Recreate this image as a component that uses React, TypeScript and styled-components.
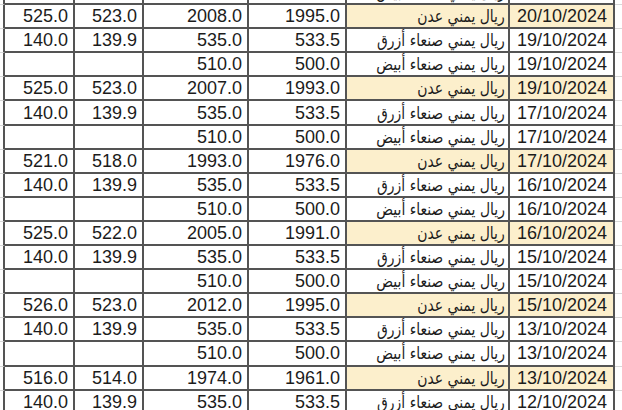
import React from 'react';
import styled, {createGlobalStyle} from 'styled-components';

type Kind = 'left' | 'right' | 'num' | 'label' | 'date';

interface RowData {
    nums: [string, string, string, string];
    label: string;
    date: string;
    aden?: boolean;
}

const ADEN = 'ريال يمني عدن';
const BLUE = 'ريال يمني صنعاء أزرق';
const WHITE = 'ريال يمني صنعاء أبيض';

const rows: RowData[] = [
    {nums: ['', '', '510.0', '500.0'], label: WHITE, date: '20/10/2024'},
    {nums: ['525.0', '523.0', '2008.0', '1995.0'], label: ADEN, date: '20/10/2024', aden: true},
    {nums: ['140.0', '139.9', '535.0', '533.5'], label: BLUE, date: '19/10/2024'},
    {nums: ['', '', '510.0', '500.0'], label: WHITE, date: '19/10/2024'},
    {nums: ['525.0', '523.0', '2007.0', '1993.0'], label: ADEN, date: '19/10/2024', aden: true},
    {nums: ['140.0', '139.9', '535.0', '533.5'], label: BLUE, date: '17/10/2024'},
    {nums: ['', '', '510.0', '500.0'], label: WHITE, date: '17/10/2024'},
    {nums: ['521.0', '518.0', '1993.0', '1976.0'], label: ADEN, date: '17/10/2024', aden: true},
    {nums: ['140.0', '139.9', '535.0', '533.5'], label: BLUE, date: '16/10/2024'},
    {nums: ['', '', '510.0', '500.0'], label: WHITE, date: '16/10/2024'},
    {nums: ['525.0', '522.0', '2005.0', '1991.0'], label: ADEN, date: '16/10/2024', aden: true},
    {nums: ['140.0', '139.9', '535.0', '533.5'], label: BLUE, date: '15/10/2024'},
    {nums: ['', '', '510.0', '500.0'], label: WHITE, date: '15/10/2024'},
    {nums: ['526.0', '523.0', '2012.0', '1995.0'], label: ADEN, date: '15/10/2024', aden: true},
    {nums: ['140.0', '139.9', '535.0', '533.5'], label: BLUE, date: '13/10/2024'},
    {nums: ['', '', '510.0', '500.0'], label: WHITE, date: '13/10/2024'},
    {nums: ['516.0', '514.0', '1974.0', '1961.0'], label: ADEN, date: '13/10/2024', aden: true},
    {nums: ['140.0', '139.9', '535.0', '533.5'], label: BLUE, date: '12/10/2024'},
];

const GlobalStyle = createGlobalStyle`
  html, body {
    margin: 0;
    padding: 0;
    background: #fff;
    overflow: hidden;
  }
`;

export default function App() {
    return (
        <>
            <GlobalStyle/>
            <Sheet>
                <StyledGrid>
                    {rows.map((row, i) => (
                        <React.Fragment key={i}>
                            <StyledCell $kind="left"/>
                            {row.nums.map((n, j) => (
                                <StyledCell key={j} $kind="num">{n}</StyledCell>
                            ))}
                            <StyledCell $kind="label" $highlight={row.aden}>
                                <StyledLabel dir="rtl">{row.label}</StyledLabel>
                            </StyledCell>
                            <StyledCell $kind="date" $highlight={row.aden}>{row.date}</StyledCell>
                            <StyledCell $kind="right"/>
                        </React.Fragment>
                    ))}
                </StyledGrid>
            </Sheet>
        </>
    );
}

const Sheet = styled.div`
  width: 622px;
  height: 410px;
  overflow: hidden;
  background: #fff;
`;

const StyledGrid = styled.div`
  margin-top: -19px;
  display: grid;
  grid-template-columns: 5px 70px 69px 105px 98px 163px 105px 7px;
  grid-auto-rows: 24.1px;
  font-family: "Liberation Sans", Arial, sans-serif;
  font-size: 18px;
  color: #1c1c1c;
`;

const StyledCell = styled.div<{ $kind: Kind; $highlight?: boolean }>`
  box-sizing: border-box;
  display: flex;
  align-items: center;
  justify-content: flex-end;
  padding: 1px 5px 0 0;
  white-space: nowrap;
  overflow: hidden;
  border-right: 2px solid #545454;
  border-bottom: 2px solid #545454;
  background: ${({$highlight}) => ($highlight ? '#fcefcc' : '#fff')};

  ${({$kind}) => $kind === 'left' && `
    padding: 0;
    border-bottom: 1px solid #d8d8d8;
  `}

  ${({$kind}) => $kind === 'right' && `
    padding: 0;
    border-right: none;
    border-bottom: 1px solid #d8d8d8;
  `}

  ${({$kind}) => $kind === 'label' && `
    padding: 0 3px 0 0;
  `}

  ${({$kind}) => $kind === 'date' && `
    padding: 1px 6px 0 0;
  `}
`;

const StyledLabel = styled.span`
  display: inline-block;
  font-family: "DejaVu Sans", sans-serif;
  font-size: 17px;
  direction: rtl;
  transform: scaleX(0.82);
  transform-origin: right center;
`;
